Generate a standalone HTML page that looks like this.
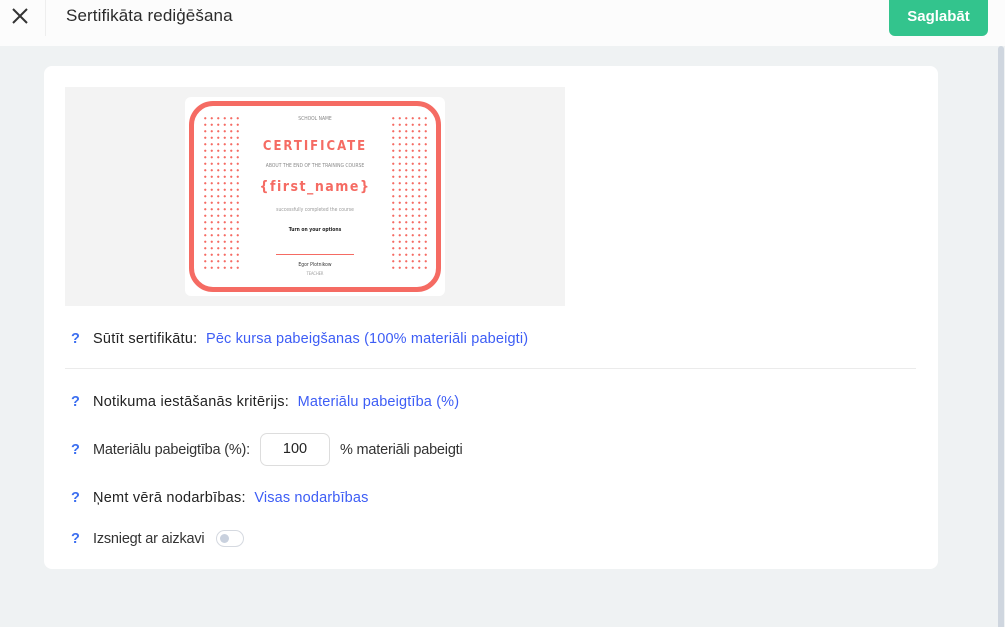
<!DOCTYPE html>
<html><head><meta charset="utf-8">
<style>
*{box-sizing:border-box;margin:0;padding:0}
body{width:1005px;height:627px;overflow:hidden;background:#eff2f3;font-family:"Liberation Sans",sans-serif;position:relative}
.hdr{position:absolute;left:0;top:0;width:1005px;height:46px;background:#fcfcfc}
.sep{position:absolute;left:45px;top:0;width:1px;height:36px;background:#eee}
.title{position:absolute;left:66px;top:6px;font-size:17px;color:#2b2b2b;letter-spacing:0.1px}
.btn{position:absolute;left:889px;top:0;width:99px;height:36px;background:#33c48d;border-radius:0 0 6px 6px;color:#fff;font-weight:bold;font-size:15px;text-align:center;line-height:34px}
.sb{position:absolute;left:998px;top:46px;width:6px;height:581px;background:#cfd6df;border-radius:3px 3px 0 0}
.card{position:absolute;left:44px;top:66px;width:894px;height:503px;background:#fff;border-radius:8px}
.prev{position:absolute;left:21px;top:21px;width:500px;height:219px;background:#f3f3f3}
.cert{position:absolute;left:120px;top:10px;width:260px;height:199px;background:#fff;border-radius:6px}
.frame{position:absolute;left:4px;top:4px;width:252px;height:191px;border:5px solid #f56b63;border-radius:24px}
.dots{position:absolute;top:18px;height:156px;background-image:radial-gradient(circle,#f56b63 0.9px,transparent 1.3px);background-size:6.5px 6.5px}
.c{position:absolute;left:0;width:260px;text-align:center;font-family:"DejaVu Sans Condensed","Liberation Sans Narrow",sans-serif}
.row{position:absolute;left:27px;font-size:14.5px;letter-spacing:0.25px;color:#222;white-space:nowrap}
.g{letter-spacing:-0.2px;color:#333}
.q{color:#3c6ff0;font-weight:bold;display:inline-block;width:22px;letter-spacing:0}
.lk{color:#3d5df5;letter-spacing:0.15px}
.hr{position:absolute;left:21px;top:302px;width:851px;height:1px;background:#ebebeb}
.inp{position:absolute;left:216px;top:367px;width:70px;height:33px;border:1px solid #ddd;border-radius:7px;text-align:center;line-height:31px;font-size:14.5px;color:#222}
.tg{position:absolute;left:172px;top:464px;width:28px;height:17px;border:1px solid #d5d9e0;border-radius:9px}
.tg:after{content:"";position:absolute;left:3px;top:3px;width:9px;height:9px;border-radius:50%;background:#c9d1de}
</style></head><body>
<div class="hdr">
<svg style="position:absolute;left:11px;top:7px" width="18" height="18" viewBox="0 0 18 18"><path d="M2 2L16 16M16 2L2 16" stroke="#333" stroke-width="2"/></svg>
<div class="sep"></div>
<div class="title">Sertifikāta rediģēšana</div>
<div class="btn">Saglabāt</div>
</div>
<div class="sb"></div>
<div class="card">
<div class="prev"><div class="cert">
<div class="frame"></div>
<div class="dots" style="left:17px;width:40px"></div>
<div class="dots" style="left:205px;width:40px"></div>
<div class="c" style="top:19px;font-size:5px;color:#888">SCHOOL NAME</div>
<div class="c" style="top:42px;font-size:13px;color:#f56b63;letter-spacing:2px;font-weight:bold">CERTIFICATE</div>
<div class="c" style="top:66px;font-size:5px;color:#888">ABOUT THE END OF THE TRAINING COURSE</div>
<div class="c" style="top:82px;font-size:14px;color:#f56b63;letter-spacing:1.5px;font-weight:bold">{first_name}</div>
<div class="c" style="top:110px;font-size:5px;color:#999">successfully completed the course</div>
<div class="c" style="top:130px;font-size:5px;color:#222;font-weight:bold">Turn on your options</div>
<div style="position:absolute;left:91px;top:157px;width:78px;height:1px;background:#f56b63"></div>
<div class="c" style="top:165px;font-size:5px;color:#333">Egor Plotnikow</div>
<div class="c" style="top:174px;font-size:4px;color:#999">TEACHER</div>
</div></div>
<div class="row" style="top:265px"><span class="q">?</span>Sūtīt sertifikātu:&nbsp; <span class="lk">Pēc kursa pabeigšanas (100% materiāli pabeigti)</span></div>
<div class="hr"></div>
<div class="row" style="top:328px"><span class="q">?</span>Notikuma iestāšanās kritērijs:&nbsp; <span class="lk">Materiālu pabeigtība (%)</span></div>
<div class="row g" style="top:376px"><span class="q">?</span>Materiālu pabeigtība (%):</div>
<div class="inp">100</div>
<div class="row g" style="left:296px;top:376px">% materiāli pabeigti</div>
<div class="row" style="top:424px"><span class="q">?</span>Ņemt vērā nodarbības:&nbsp; <span class="lk">Visas nodarbības</span></div>
<div class="row g" style="top:465px"><span class="q">?</span>Izsniegt ar aizkavi</div>
<div class="tg"></div>
</div>
</body></html>
